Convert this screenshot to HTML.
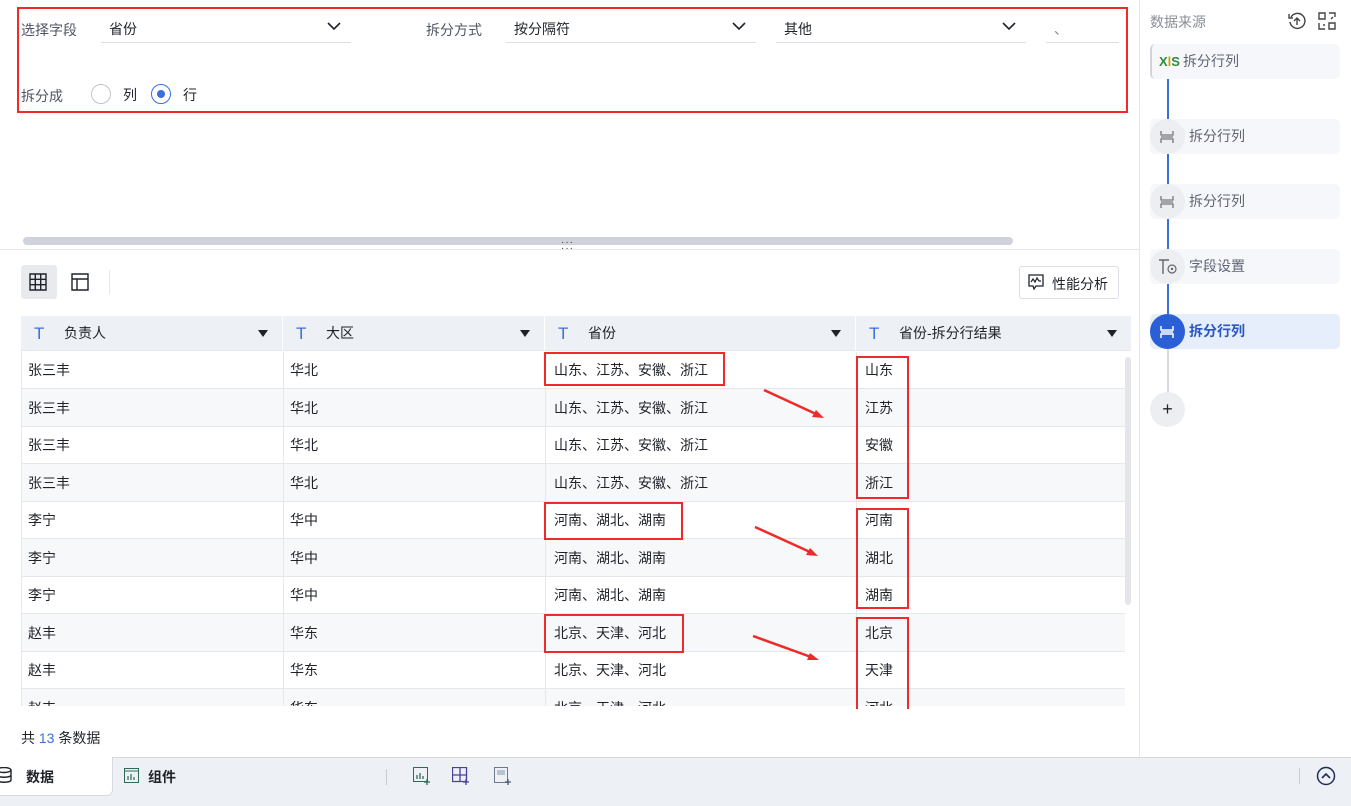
<!DOCTYPE html>
<html><head><meta charset="utf-8"><style>
*{box-sizing:border-box;margin:0;padding:0}
body{width:1351px;height:806px;overflow:hidden;background:#fff;font-family:"Liberation Sans","Noto Sans CJK SC",sans-serif;font-size:14px;color:#1f2329;position:relative}
.a{position:absolute}
.lbl{color:#4f5563;font-size:14px}
.sel{border-bottom:1px solid #dcdfe6;height:28px}
.chev{position:absolute;right:10px;top:6px}
.row{position:absolute;left:0;width:1104px;border-bottom:1px solid #e4e7ec}
.row div{position:absolute;top:0;bottom:0;display:flex;align-items:center;border-right:1px solid #e4e7ec}
.hd div{position:absolute;top:0;height:35px;line-height:35px;border-right:1px solid #fff}
.T{color:#3b6fe0;font-size:17px;position:absolute;left:13px;font-family:"Liberation Sans",sans-serif}
.tri{position:absolute;right:14px;top:14px;width:0;height:0;border-left:5px solid transparent;border-right:5px solid transparent;border-top:7px solid #1f2329}
.rb{position:absolute;border:2px solid #ee2a2a}
.node{position:absolute;left:1150px;width:190px;height:35px;background:#f6f7fa;border-radius:5px;line-height:35px;color:#5f6573}
.circ{position:absolute;left:1150px;width:35px;height:35px;border-radius:50%;background:#eceef2}
</style></head><body>

<div class="rb" style="left:17px;top:7px;width:1111px;height:106px"></div>
<div class="a lbl" style="left:21px;top:20px">选择字段</div>
<div class="a sel" style="left:101px;top:15px;width:250px"><span class="a" style="left:8px;top:4px">省份</span>
<svg class="chev" width="14" height="10" viewBox="0 0 14 10"><path d="M1 2l6 6 6-6" fill="none" stroke="#1f2329" stroke-width="1.6"/></svg></div>
<div class="a lbl" style="left:426px;top:20px">拆分方式</div>
<div class="a sel" style="left:506px;top:15px;width:250px"><span class="a" style="left:8px;top:4px">按分隔符</span>
<svg class="chev" width="14" height="10" viewBox="0 0 14 10"><path d="M1 2l6 6 6-6" fill="none" stroke="#1f2329" stroke-width="1.6"/></svg></div>
<div class="a sel" style="left:776px;top:15px;width:250px"><span class="a" style="left:8px;top:4px">其他</span>
<svg class="chev" width="14" height="10" viewBox="0 0 14 10"><path d="M1 2l6 6 6-6" fill="none" stroke="#1f2329" stroke-width="1.6"/></svg></div>
<div class="a sel" style="left:1046px;top:15px;width:73px"><span class="a" style="left:8px;top:4px;color:#888">、</span></div>
<div class="a lbl" style="left:21px;top:86px">拆分成</div>
<div class="a" style="left:91px;top:84px;width:20px;height:20px;border:1px solid #c0c4cc;border-radius:50%"></div>
<div class="a" style="left:123px;top:85px">列</div>
<div class="a" style="left:151px;top:84px;width:20px;height:20px;border:1px solid #3b6fe0;border-radius:50%"><div class="a" style="left:5px;top:5px;width:8px;height:8px;border-radius:50%;background:#3b6fe0"></div></div>
<div class="a" style="left:183px;top:85px">行</div>

<div class="a" style="left:23px;top:237px;width:990px;height:8px;background:#d0d3d9;border-radius:4px"></div>
<div class="a" style="left:0;top:249px;width:1139px;height:1px;background:#e4e7ec"></div>
<div class="a" style="left:561px;top:240px;font-size:10px;line-height:6px;color:#333;letter-spacing:1px">···<br>···</div>

<div class="a" style="left:21px;top:265px;width:36px;height:34px;background:#e8eaee;border-radius:3px"></div>
<svg class="a" style="left:29px;top:273px" width="18" height="18" viewBox="0 0 18 18"><path d="M1 1h16v16H1zM1 6.3h16M1 11.7h16M6.3 1v16M11.7 1v16" fill="none" stroke="#1f2329" stroke-width="1.4"/></svg>
<svg class="a" style="left:71px;top:273px" width="18" height="18" viewBox="0 0 18 18"><path d="M1 1h16v16H1zM1 6h16M6 6v11" fill="none" stroke="#1f2329" stroke-width="1.4"/></svg>
<div class="a" style="left:109px;top:270px;width:1px;height:24px;background:#e4e7ec"></div>
<div class="a" style="left:1019px;top:266px;width:100px;height:33px;border:1px solid #dcdfe6;border-radius:3px"></div>
<svg class="a" style="left:1028px;top:274px" width="16" height="16" viewBox="0 0 16 16"><path d="M1 1h14v11H8l-2 3-1-3H1z" fill="none" stroke="#1f2329" stroke-width="1.3"/><path d="M3 8l2-3 2 3 2-4 2 3h2" fill="none" stroke="#1f2329" stroke-width="1.2"/></svg>
<div class="a" style="left:1052px;top:274px">性能分析</div>

<div class="a hd" style="left:21px;top:316px;width:1110px;height:35px;background:#edf0f5;border-bottom:1px solid #e4e7ec">
<div style="left:0;width:262px"><span class="T">T</span><span style="position:absolute;left:43px">负责人</span><i class="tri"></i></div>
<div style="left:262px;width:262px"><span class="T">T</span><span style="position:absolute;left:43px">大区</span><i class="tri"></i></div>
<div style="left:524px;width:311px"><span class="T">T</span><span style="position:absolute;left:43px">省份</span><i class="tri"></i></div>
<div style="left:835px;width:275px;border-right:none"><span class="T">T</span><span style="position:absolute;left:43px">省份-拆分行结果</span><i class="tri"></i></div>
</div>

<div class="a" style="left:21px;top:351px;width:1104px;height:355px;overflow:hidden;border-left:1px solid #e4e7ec">
<div id="rows"></div>
</div>
<div class="a" style="left:1125px;top:357px;width:6px;height:248px;background:#e4e6ea;border-radius:3px"></div>

<script>
var d=[["张三丰","华北","山东、江苏、安徽、浙江","山东"],["张三丰","华北","山东、江苏、安徽、浙江","江苏"],["张三丰","华北","山东、江苏、安徽、浙江","安徽"],["张三丰","华北","山东、江苏、安徽、浙江","浙江"],["李宁","华中","河南、湖北、湖南","河南"],["李宁","华中","河南、湖北、湖南","湖北"],["李宁","华中","河南、湖北、湖南","湖南"],["赵丰","华东","北京、天津、河北","北京"],["赵丰","华东","北京、天津、河北","天津"],["赵丰","华东","北京、天津、河北","河北"]];
var t=[352,389,427,464,502,539,577,614,652,689,727];
var h="";d.forEach(function(r,i){h+='<div class="row" style="top:'+(t[i]-351)+'px;height:'+(t[i+1]-t[i])+'px;background:'+(i%2?'#f7f8fa':'#fff')+'"><div style="left:0;width:262px;padding-left:6px">'+r[0]+'</div><div style="left:262px;width:262px;padding-left:6px">'+r[1]+'</div><div style="left:524px;width:311px;padding-left:8px">'+r[2]+'</div><div style="left:835px;width:269px;padding-left:8px;border-right:none">'+r[3]+'</div></div>';});
document.getElementById("rows").innerHTML=h;
</script>

<div class="rb" style="left:544px;top:352px;width:181px;height:34px"></div>
<div class="rb" style="left:856px;top:356px;width:53px;height:143px"></div>
<div class="rb" style="left:544px;top:502px;width:139px;height:38px"></div>
<div class="rb" style="left:856px;top:508px;width:53px;height:101px"></div>
<div class="rb" style="left:544px;top:614px;width:140px;height:39px"></div>
<div class="rb" style="left:856px;top:617px;width:53px;height:92px;border-bottom:none"></div>
<svg class="a" style="left:0;top:0" width="1139" height="750">
<g stroke="#ee2a2a" stroke-width="2.5" fill="#ee2a2a">
<line x1="764" y1="390" x2="816" y2="414"/><path d="M824 418l-12-1 4-7z" stroke="none"/>
<line x1="755" y1="527" x2="810" y2="552"/><path d="M818 556l-12-1 4-7z" stroke="none"/>
<line x1="753" y1="636" x2="811" y2="657"/><path d="M819 660l-12 0 3-7z" stroke="none"/>
</g></svg>

<div class="a" style="left:21px;top:728px">共 <span style="color:#3b6fe0">13</span> 条数据</div>

<div class="a" style="left:1139px;top:0;width:1px;height:757px;background:#e4e7ec"></div>
<div class="a" style="left:1150px;top:12px;color:#8a8f99">数据来源</div>
<svg class="a" style="left:1288px;top:12px" width="18" height="18" viewBox="0 0 18 18"><path d="M3 5A7.5 7.5 0 1 1 2 10" fill="none" stroke="#444" stroke-width="1.4"/><path d="M1 2v4h4" fill="none" stroke="#444" stroke-width="1.4"/><path d="M9 13V6M6 9l3-3 3 3" fill="none" stroke="#444" stroke-width="1.4"/></svg>
<svg class="a" style="left:1318px;top:12px" width="18" height="18" viewBox="0 0 18 18"><path d="M1 1h6v6H1zM11 11h6v6h-6zM11 1h6v4M1 11v6h6M13 7l2-2M7 13l-2 0" fill="none" stroke="#444" stroke-width="1.4"/></svg>
<div class="a" style="left:1167px;top:79px;width:2px;height:316px;background:#3b6fe0"></div>
<div class="a" style="left:1167px;top:348px;width:2px;height:50px;background:#d6d9df"></div>
<div class="node" style="top:44px;border-left:2px solid #d0d3d9"><span style="position:absolute;left:7px;top:0;font-weight:bold;color:#2e8b3a;font-size:13px">X<span style="color:#c9a400">l</span>S</span><span style="position:absolute;left:31px">拆分行列</span></div>
<div class="node" style="top:119px"><span style="position:absolute;left:39px">拆分行列</span></div>
<div class="node" style="top:184px"><span style="position:absolute;left:39px">拆分行列</span></div>
<div class="node" style="top:249px"><span style="position:absolute;left:39px">字段设置</span></div>
<div class="node" style="top:314px;background:#e6eefc;color:#2a56c6;font-weight:bold"><span style="position:absolute;left:39px">拆分行列</span></div>
<div class="circ" style="top:119px"></div><div class="circ" style="top:184px"></div><div class="circ" style="top:249px"></div>
<div class="circ" style="top:314px;background:#2a5fd6"></div>
<div class="circ" style="top:392px;text-align:center;line-height:35px;font-size:18px">+</div>
<svg class="a" style="left:1159px;top:129px" width="16" height="16" viewBox="0 0 16 16"><path d="M2 2v4h12V2M2 14v-4h12v4M2 8h12" fill="none" stroke="#777" stroke-width="1.3"/></svg>
<svg class="a" style="left:1159px;top:194px" width="16" height="16" viewBox="0 0 16 16"><path d="M2 2v4h12V2M2 14v-4h12v4M2 8h12" fill="none" stroke="#777" stroke-width="1.3"/></svg>
<svg class="a" style="left:1158px;top:258px" width="20" height="18" viewBox="0 0 20 18"><path d="M1 2h10M5 2v14" fill="none" stroke="#666" stroke-width="1.4"/><circle cx="14" cy="11" r="4" fill="none" stroke="#666" stroke-width="1.2"/><circle cx="14" cy="11" r="1.2" fill="#666"/></svg>
<svg class="a" style="left:1159px;top:324px" width="16" height="16" viewBox="0 0 16 16"><path d="M2 2v4h12V2M2 14v-4h12v4M2 8h12" fill="none" stroke="#fff" stroke-width="1.5"/></svg>

<div class="a" style="left:0;top:757px;width:1351px;height:49px;background:#edf0f5;border-top:1px solid #d6d9df"></div>
<div class="a" style="left:0;top:757px;width:113px;height:39px;background:#fff;border-radius:0 0 6px 0;border-right:1px solid #d6d9df;border-bottom:1px solid #d6d9df"></div>
<svg class="a" style="left:0;top:767px" width="12" height="16" viewBox="0 0 12 16"><ellipse cx="4" cy="3" rx="7" ry="2.5" fill="none" stroke="#1f2329" stroke-width="1.4"/><path d="M-3 3v10c0 3 14 3 14 0V3M-3 8c0 3 14 3 14 0" fill="none" stroke="#1f2329" stroke-width="1.4"/></svg>
<div class="a" style="left:26px;top:767px;font-weight:bold">数据</div>
<svg class="a" style="left:124px;top:768px" width="15" height="15" viewBox="0 0 15 15"><rect x="0.5" y="0.5" width="14" height="14" fill="none" stroke="#2f6a55"/><path d="M1 3h13" stroke="#2f6a55"/><path d="M4 12V8M7 12V6M10 12V9" stroke="#2f6a55" stroke-width="1.2"/></svg>
<div class="a" style="left:148px;top:767px;font-weight:bold">组件</div>
<div class="a" style="left:386px;top:769px;width:1px;height:16px;background:#c8ccd3"></div>
<svg class="a" style="left:413px;top:767px" width="18" height="18" viewBox="0 0 18 18"><rect x="0.5" y="0.5" width="14" height="14" fill="none" stroke="#2f6a55"/><path d="M4 12V8M7 12V6M10 12V9M14 12v6M11 15h6" stroke="#2f6a55" stroke-width="1.3"/></svg>
<svg class="a" style="left:452px;top:767px" width="18" height="18" viewBox="0 0 18 18"><path d="M.5 .5h14v14H.5zM.5 8h14M8 .5v14" fill="none" stroke="#4a3fa0" stroke-width="1.3"/><path d="M14 12v6M11 15h6" stroke="#4a3fa0" stroke-width="1.3"/></svg>
<svg class="a" style="left:494px;top:767px" width="18" height="18" viewBox="0 0 18 18"><rect x="0.5" y="0.5" width="13" height="15" fill="none" stroke="#6a7a90"/><rect x="3" y="3" width="8" height="5" fill="#b8c2d0"/><path d="M14 12v6M11 15h6" stroke="#4a5a70" stroke-width="1.3"/></svg>
<div class="a" style="left:1299px;top:768px;width:1px;height:16px;background:#c8ccd3"></div>
<svg class="a" style="left:1316px;top:766px" width="20" height="20" viewBox="0 0 20 20"><circle cx="10" cy="10" r="8.5" fill="none" stroke="#1f2d5a" stroke-width="1.5"/><path d="M6 12l4-4 4 4" fill="none" stroke="#1f2d5a" stroke-width="1.6"/></svg>
</body></html>
